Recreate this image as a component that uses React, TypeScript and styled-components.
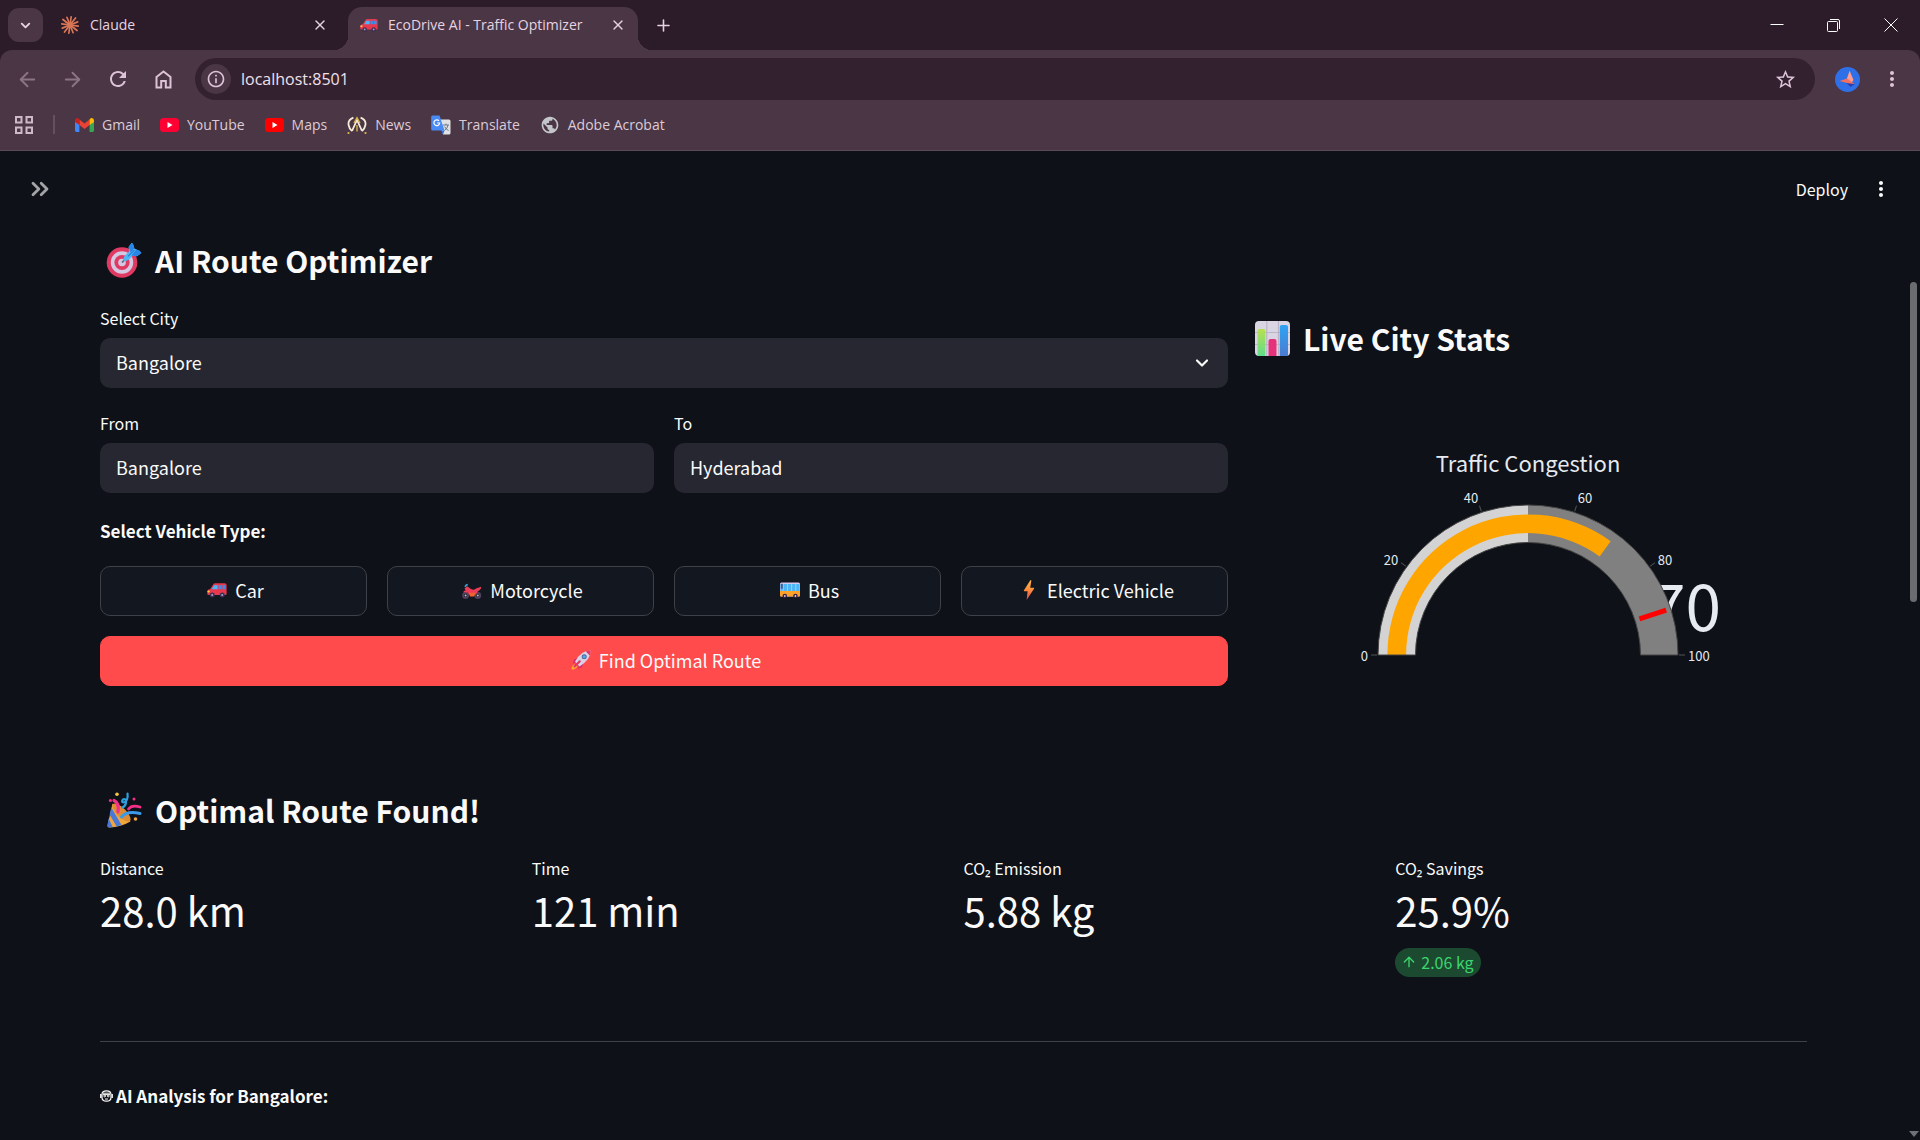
import React, { useState } from "react";
import styled, { createGlobalStyle } from "styled-components";
import { ArrowLeft, ArrowRight, ArrowUp, ChevronDown, ChevronsRight, Plus, X } from "lucide-react";
import {
  MdRefresh,
  MdStarBorder,
  MdMoreVert,
  MdInfoOutline,
  MdPublic,
} from "react-icons/md";

const chromeFont = `"Open Sans", "Noto Sans", sans-serif`;
const appFont = `"Noto Sans CJK JP", "Noto Sans", sans-serif`;

const GlobalStyle = createGlobalStyle`
  * { box-sizing: border-box; }
  body { margin: 0; background: #0e1117; overflow: hidden; }
  button, input, select { font: inherit; color: inherit; margin: 0; }
  h1, h2, h3, p, dl, dd, dt { margin: 0; }
  svg { display: block; flex: none; }
`;

/* ---------- Browser frame ---------- */

const Window = styled.div`
  display: flex;
  flex-direction: column;
  height: 100vh;
  overflow: hidden;
`;

const Frame = styled.header`
  background: #2c1b28;
  color: #e6d3e0;
  font-family: ${chromeFont};
  font-size: 14px;
  line-height: 20px;
`;

const TabStrip = styled.div`
  display: flex;
  align-items: center;
  height: 50px;
  padding-left: 8px;
`;

const TabSearch = styled.button`
  display: grid;
  place-items: center;
  width: 35px;
  height: 34px;
  border: 0;
  border-radius: 11px;
  padding: 0;
  background: #4b3645;
`;

const Tab = styled.div<{ $active?: boolean }>`
  position: relative;
  display: flex;
  align-items: center;
  gap: 10px;
  align-self: flex-end;
  height: 43px;
  width: ${(p) => (p.$active ? 290 : 305)}px;
  padding: ${(p) => (p.$active ? "0 12px 7px 12px" : "0 20px 7px 17px")};
  border-radius: 14px 14px 0 0;
  background: ${(p) => (p.$active ? "#4b3645" : "transparent")};
  &::before,
  &::after {
    content: "";
    display: ${(p) => (p.$active ? "block" : "none")};
    position: absolute;
    bottom: 0;
    width: 14px;
    height: 14px;
  }
  &::before {
    left: -14px;
    background: radial-gradient(circle at 0 0, transparent 14px, #4b3645 14px);
  }
  &::after {
    right: -14px;
    background: radial-gradient(circle at 100% 0, transparent 14px, #4b3645 14px);
  }
`;

const TabTitle = styled.span`
  flex: 1;
  white-space: nowrap;
`;

const PlainButton = styled.button<{ $dim?: boolean }>`
  display: grid;
  place-items: center;
  border: 0;
  padding: 0;
  background: none;
  color: ${(p) => (p.$dim ? "#8b7585" : "inherit")};
`;

const NewTab = styled(PlainButton)`
  width: 26px;
  margin-left: 12px;
`;

const WindowControls = styled.div`
  display: flex;
  gap: 41px;
  margin-left: auto;
  padding-right: 21px;
  color: #fff;
`;

const Toolbar = styled.div`
  display: flex;
  align-items: center;
  height: 58px;
  padding: 0 16px;
  background: #4b3645;
  border-radius: 12px 12px 0 0;
  color: #dcc3d6;
`;

const NavButtons = styled.div`
  display: flex;
  gap: 22px;
  margin-right: 20px;
`;

const Omnibox = styled.div`
  display: flex;
  align-items: center;
  flex: 1;
  height: 42px;
  padding: 0 18px 0 6px;
  border-radius: 21px;
  background: #33212f;
`;

const SiteInfo = styled(PlainButton)`
  width: 30px;
  height: 30px;
  border-radius: 15px;
  background: #4b3645;
`;

const Address = styled.input`
  flex: 1;
  border: 0;
  outline: 0;
  padding: 0 10px;
  background: none;
  color: #f0e0ea;
  font-size: 16px;
`;

const Profile = styled(PlainButton)`
  margin: 0 20px;
`;

const Bookmarks = styled.nav`
  display: flex;
  align-items: center;
  gap: 20px;
  height: 43px;
  padding: 0 15px 9px;
  border-bottom: 1px solid #5a4a55;
  background: #4b3645;
`;

const BookmarkRule = styled.span`
  width: 2px;
  height: 19px;
  background: #65505f;
`;

const Bookmark = styled.a`
  display: flex;
  align-items: center;
  gap: 8px;
  color: #dccbd7;
  text-decoration: none;
`;

/* ---------- Page ---------- */

const Viewport = styled.div`
  display: flex;
  flex: 1;
  min-height: 0;
  background: #0e1117;
  color: #fafafa;
  font-family: ${appFont};
  font-size: 18px;
  line-height: 30px;
`;

const Page = styled.div`
  flex: 1;
  min-width: 0;
`;

const AppHeader = styled.div`
  display: flex;
  align-items: center;
  justify-content: space-between;
  height: 75px;
  padding: 0 14px 0 26px;
`;

const HeaderActions = styled.div`
  display: flex;
  align-items: center;
  gap: 21px;
  font-size: 16px;
`;

const ScrollGutter = styled.div`
  display: flex;
  flex-direction: column;
  justify-content: space-between;
  align-items: center;
  width: 13px;
  padding: 131px 0 3px;
`;

const ScrollThumb = styled.div`
  width: 7px;
  height: 320px;
  border-radius: 4px;
  background: #6b6c70;
`;

const ScrollArrow = styled.div`
  border: 5px solid transparent;
  border-top: 6px solid #6f7177;
  border-bottom: 0;
`;

const Main = styled.main`
  padding: 14px 100px 0;
`;

const Columns = styled.div`
  display: flex;
  gap: 20px;
`;

const Column = styled.section<{ $share: number }>`
  flex: 1 1 calc(${(p) => p.$share}% - 20px);
  min-width: 0;
`;

const StatsColumn = styled(Column)`
  padding-top: 78px;
`;

const Heading = styled.h3`
  display: flex;
  align-items: center;
  gap: 7px;
  margin-bottom: 26px;
  font-size: 30px;
  font-weight: 700;
  line-height: 40px;
  white-space: nowrap;
`;

const HeadingIcon = styled.span`
  display: flex;
  justify-content: center;
  width: 48px;
`;

const Field = styled.div`
  flex: 1;
  min-width: 0;
  margin-bottom: 23px;
`;

const FieldRow = styled.div`
  display: flex;
  gap: 20px;
`;

const Label = styled.label`
  display: block;
  margin-bottom: 8px;
  font-size: 16px;
  line-height: 24px;
`;

const TextBox = styled.input`
  display: block;
  width: 100%;
  height: 50px;
  padding: 0 16px 2px;
  border: 0;
  border-radius: 10px;
  background: #262730;
`;

const SelectWrap = styled.div`
  display: grid;
  align-items: center;
  & > * {
    grid-area: 1 / 1;
  }
  & > svg {
    justify-self: end;
    margin-right: 16px;
    pointer-events: none;
  }
`;

const SelectBox = styled.select`
  appearance: none;
  width: 100%;
  height: 50px;
  padding: 0 16px 2px;
  border: 0;
  border-radius: 10px;
  background: #262730;
`;

const Strong = styled.p`
  font-size: 17px;
  font-weight: 700;
`;

const VehicleRow = styled.div`
  display: grid;
  grid-template-columns: repeat(4, 1fr);
  gap: 20px;
  margin: 20px 0;
`;

const ActionButton = styled.button<{ $primary?: boolean }>`
  display: flex;
  align-items: center;
  justify-content: center;
  gap: 8px;
  width: 100%;
  height: 50px;
  padding: 0 0 2px 4px;
  border: 1px solid ${(p) => (p.$primary ? "#ff4b4b" : "#3e4148")};
  border-radius: 10px;
  background: ${(p) => (p.$primary ? "#ff4b4b" : "#131720")};
`;

const Chart = styled.figure`
  display: flex;
  justify-content: center;
  margin: 72px 0 0;
`;

const ChartText = styled.text<{ $size: number }>`
  fill: #e6eaf1;
  font-family: ${appFont};
  font-size: ${(p) => p.$size}px;
`;

const ResultHeading = styled(Heading)`
  margin-top: 104px;
`;

const Metrics = styled.dl`
  display: grid;
  grid-template-columns: repeat(4, 1fr);
  gap: 20px;
`;

const MetricLabel = styled.dt`
  font-size: 16px;
  line-height: 24px;
`;

const MetricValue = styled.dd`
  margin-bottom: 8px;
  font-size: 40px;
  line-height: 60px;
`;

const Delta = styled.dd`
  display: flex;
  align-items: center;
  gap: 4px;
  width: fit-content;
  height: 29px;
  padding: 0 7px 1px 6px;
  border-radius: 15px;
  background: #1b4a31;
  color: #3dd56d;
  font-size: 16px;
`;

const Divider = styled.hr`
  height: 1px;
  margin: 64px 0 39px;
  border: 0;
  background: #3e4148;
`;

const Analysis = styled(Strong)`
  display: flex;
  align-items: center;
  gap: 3px;
`;

/* ---------- Drawings ---------- */

const ClaudeMark = () => (
  <svg width="20" height="20" viewBox="0 0 20 20" stroke="#d97757" strokeWidth="1.7" strokeLinecap="round">
    {Array.from({ length: 12 }, (_, i) => {
      const a = ((i * 30 + 8) * Math.PI) / 180;
      const r = i % 3 === 1 ? 9 : 8.3;
      return <line key={i} x1="10" y1="10" x2={10 + r * Math.cos(a)} y2={10 + r * Math.sin(a)} />;
    })}
  </svg>
);

const HomeIcon = () => (
  <svg width="23" height="23" viewBox="1 1 23 23" fill="none" stroke="currentColor" strokeWidth="2">
    <path d="M5.5 10 12.5 4.5 19.5 10V20.5H14.8V14H10.2V20.5H5.5Z" />
  </svg>
);

const CarIcon = ({ size = 20 }: { size?: number }) => (
  <svg width={size} height={size} viewBox="0 0 20 20">
    <path d="M5.6 5.4Q6.4 3.2 8 3.2H17.5Q19.6 3.2 19.6 5.1V14Q19.6 15 18.5 15H1.5Q.3 15 .3 13.8V11Q.5 9.4 3.2 9Z" fill="#e8384f" />
    <path d="M7 5.2H10.6V9.2H4.6Z" fill="#4fb4f5" />
    <path d="M11.6 5.2H14.7V9.2H11.6ZM15.6 5.2H18.4V9.2H15.6Z" fill="#3b8fe8" />
    <rect x=".4" y="10.4" width="2.4" height="2" rx="1" fill="#ffc83d" />
    <circle cx="5.2" cy="14.9" r="2.5" fill="#3b2f55" />
    <circle cx="15.2" cy="14.9" r="2.5" fill="#3b2f55" />
    <circle cx="5.2" cy="14.9" r="1" fill="#a9a3bd" />
    <circle cx="15.2" cy="14.9" r="1" fill="#a9a3bd" />
  </svg>
);

const MotorcycleIcon = () => (
  <svg width="20" height="20" viewBox="0 0 20 20">
    <circle cx="3.6" cy="15.4" r="2.5" fill="none" stroke="#52425f" strokeWidth="1.8" />
    <circle cx="15.8" cy="15.4" r="2.5" fill="none" stroke="#52425f" strokeWidth="1.8" />
    <circle cx="3.6" cy="15.4" r="1" fill="#c9bdd5" />
    <circle cx="15.8" cy="15.4" r="1" fill="#c9bdd5" />
    <path d="M3.4 7Q3 5 5.8 4.4" fill="none" stroke="#35a5dc" strokeWidth="1.5" />
    <path d="M2.6 8.4 5 6.2 9 9Q12 10.6 14.6 8.2L19.2 6.8Q19.4 9.6 16 11.2L13.8 14.6H7L5.6 12.6 1.2 12.2Q1.6 10.6 3.6 10.4Z" fill="#ed3c58" />
    <path d="M6.8 12.8H13.4L12.2 16.6H8Z" fill="#f3612c" />
  </svg>
);

const BusIcon = () => (
  <svg width="20" height="20" viewBox="0 0 20 20">
    <rect y="2.5" width="20" height="14" rx="1.5" fill="#d6c8ee" />
    <rect x=".4" y="4" width="19.2" height="7.2" fill="#4bb5f7" />
    <path d="M3.2 4V11M7.4 4V11M11.6 4V11M15.8 4V11" stroke="#8dd6ff" strokeWidth="1" />
    <path d="M0 11H20V15.5Q20 16.5 19 16.5H1Q0 16.5 0 15.5Z" fill="#fba32a" />
    <rect x=".8" y="3.8" width="2" height="5" fill="#4a5b8c" />
    <circle cx="4.8" cy="16" r="2.3" fill="#3b2040" />
    <circle cx="15.4" cy="16" r="2.3" fill="#3b2040" />
    <circle cx="4.8" cy="16" r=".9" fill="#d8d0e0" />
    <circle cx="15.4" cy="16" r=".9" fill="#d8d0e0" />
  </svg>
);

const BoltIcon = () => (
  <svg width="20" height="20" viewBox="0 0 20 20">
    <defs>
      <linearGradient id="bolt" x2="0" y2="1">
        <stop stopColor="#ffb84a" />
        <stop offset=".5" stopColor="#ff8c3a" />
        <stop offset="1" stopColor="#e8415a" />
      </linearGradient>
    </defs>
    <path d="M11.5 0 4.8 10.5Q4.6 11.2 5.4 11.2H8.6L7.6 20 15.2 8.6Q15.4 7.8 14.6 7.8H11.2L12.4.4Z" fill="url(#bolt)" />
  </svg>
);

const RocketIcon = () => (
  <svg width="20" height="20" viewBox="0 0 20 20">
    <path d="M.5 19.5Q.5 14.5 4.4 14.2L6.4 16.4Q5 19.5.5 19.5Z" fill="#ffa630" />
    <path d="M7.8 7.2 3 9.8 1.8 13.4 6 12.6ZM12.8 12.4 11 17 7.2 19 7.6 14.4Z" fill="#d52d6d" />
    <path d="M19.5.5Q20.2 9 8.6 16.4L4 11.8Q9.5.6 19.5.5Z" fill="#d9d2e6" />
    <path d="M14.8 1.4Q17 .5 19.5.5 19.6 3 18.7 5.4Z" fill="#e63264" />
    <circle cx="13.2" cy="6.8" r="2.5" fill="#5a6390" />
    <circle cx="13.2" cy="6.8" r="1.6" fill="#4aa9f2" />
    <path d="M3.5 16.5 8.8 11.2" stroke="#e63264" strokeWidth="2" strokeLinecap="round" />
  </svg>
);

const TargetIcon = () => (
  <svg width="36" height="36" viewBox="0 0 36 36">
    <circle cx="16" cy="20.5" r="15.3" fill="#e03a62" />
    <circle cx="16" cy="20.5" r="11.2" fill="#d5c8e2" />
    <circle cx="16" cy="20.5" r="7.6" fill="#e03a62" />
    <circle cx="16" cy="20.5" r="3.8" fill="#d5c8e2" />
    <path d="M16.5 20 19.5 17" stroke="#6d7490" strokeWidth="1.8" strokeLinecap="round" />
    <path d="M17.8 18.8Q16.8 15 20 12.4L23 9.6 22.6 5 25.8.8Q27.8 2.2 28.3 6.6L30.4 7.6Q34 8.4 35.4 11L31 14.2 26.6 13.6 24.6 16Q21.6 19.8 17.8 18.8Z" fill="#4db8f5" />
    <path d="M22.6 5 25.8.8Q27.8 2.2 28.3 6.6L24.6 10.6ZM27.4 10.8 30.4 7.6Q34 8.4 35.4 11L31 14.2 25.4 13.4Z" fill="#2a86e6" />
    <path d="M22 14.4 28.6 7.8" stroke="#2779d8" strokeWidth="1.2" />
  </svg>
);

const BarsIcon = () => (
  <svg width="35" height="35" viewBox="0 0 35 35">
    <defs>
      <linearGradient id="green" x2="0" y2="1">
        <stop stopColor="#b8e04f" />
        <stop offset="1" stopColor="#5fdc8b" />
      </linearGradient>
      <linearGradient id="blue" x2="0" y2="1">
        <stop stopColor="#2fa4f3" />
        <stop offset="1" stopColor="#4a7bd0" />
      </linearGradient>
    </defs>
    <rect width="35" height="35" rx="4" fill="#dad5e3" />
    <path d="M11.8 0V35M23.5 0V35M0 11.5H35M0 23.5H35" stroke="#bbb4c8" strokeWidth="1.2" />
    <path d="M2.5 35V10Q2.5 8 4.5 8H8.3Q10.3 8 10.3 10V35Z" fill="url(#green)" />
    <path d="M13.5 35V20Q13.5 18 15.5 18H19.5Q21.5 18 21.5 20V35Z" fill="#e6327a" />
    <path d="M24.8 35V6Q24.8 4 26.8 4H31Q33 4 33 6V35Z" fill="url(#blue)" />
  </svg>
);

const PartyIcon = () => (
  <svg width="36" height="36" viewBox="0 0 36 36">
    <path d="M6.5 11.5 24.5 29.5Q15 35 3.4 35.4 1.2 35.6 1.5 33.4Z" fill="#f0a63c" />
    <path d="M5.3 15.5 15.5 33 10.6 34.5 3.6 22.5ZM2.6 26.2 6.8 35.2 3 35.5Q1.2 35.4 1.5 33Z" fill="#4a78d8" />
    <ellipse cx="15.5" cy="20.5" rx="4.6" ry="12" transform="rotate(-45 15.5 20.5)" fill="#dd8b34" />
    <path d="M8 8.5Q13.5 11 12 20" fill="none" stroke="#f5308a" strokeWidth="3.2" strokeLinecap="round" />
    <path d="M21.5 1.5Q22.5 9.5 17.5 10.5 15 10 17 7.5 20.5 6 20 11 19 15 16 15.5" fill="none" stroke="#2f9fe0" strokeWidth="2.2" strokeLinecap="round" />
    <path d="M22.5 17Q26 12.5 34 15" fill="none" stroke="#f5308a" strokeWidth="2.8" strokeLinecap="round" />
    <path d="M15.5 25Q21 18.5 34 21.5" fill="none" stroke="#3a9ae8" strokeWidth="3" strokeLinecap="round" />
    <circle cx="11" cy="2.2" r="1.8" fill="#f5c543" />
    <circle cx="4.4" cy="8.5" r="1.5" fill="#f5308a" />
    <circle cx="28" cy="7" r="1.5" fill="#f5308a" />
    <circle cx="29.5" cy="27" r="1.8" fill="#f0a63c" />
  </svg>
);

const RobotIcon = () => (
  <svg width="13" height="12" viewBox="0 0 13 12" fill="none" stroke="#fafafa">
    <path d="M2 4.5Q2 .8 6.5.8T11 4.5V7.5Q11 11.2 6.5 11.2T2 7.5Z" strokeWidth="1.2" />
    <path d="M.8 4V8M12.2 4V8" strokeWidth="1.4" />
    <path d="M3 3.2H10M3 4.6H10" strokeWidth="1" />
    <path d="M5 9H8" strokeWidth="1" />
    <circle cx="4.7" cy="6" r=".9" />
    <circle cx="8.3" cy="6" r=".9" />
  </svg>
);

const GmailIcon = () => (
  <svg width="19" height="14" viewBox="0 0 19 14">
    <path d="M0 2.4V12.6Q0 14 1.4 14H4.4V6Z" fill="#4285f4" />
    <path d="M19 2.4V12.6Q19 14 17.6 14H14.6V6Z" fill="#34a853" />
    <path d="M4.4 7V1.4L9.5 5.4 14.6 1.4V7L9.5 11Z" fill="#ea4335" />
    <path d="M0 4V2.2Q.3 0 2.4 0 3.2 0 4.4 1.2V7Z" fill="#c5221f" />
    <path d="M19 4V2.2Q18.7 0 16.6 0 15.8 0 14.6 1.2V7Z" fill="#fbbc04" />
  </svg>
);

const TubeIcon = ({ fill }: { fill: string }) => (
  <svg width="19" height="14" viewBox="0 0 19 14">
    <rect width="19" height="14" rx="3.5" fill={fill} />
    <path d="M7.5 4V10L12.5 7Z" fill="#fff" />
  </svg>
);

const NewsIcon = () => (
  <svg width="20" height="18" viewBox="0 0 20 18" fill="none" strokeWidth="1.8">
    <path d="M6.4 1.6Q.6 4 1.6 9 2.2 12.6 5 15M13.6 1.6Q19.4 4 18.4 9 17.8 12.6 15 15" stroke="#f4ecd8" />
    <path d="M5 15 10 4 15 15" stroke="#f4ecd8" />
    <path d="M7 7 10 1.6 13 7M10 9V15.5" stroke="#d9b14a" strokeWidth="1.4" />
    <path d="M1.5 16V18M18.5 16V18" stroke="#d9b14a" />
  </svg>
);

const TranslateIcon = () => (
  <svg width="20" height="20" viewBox="0 0 20 20">
    <path d="M8 4.5H18Q19.5 4.5 19.5 6V18Q19.5 19.5 18 19.5H12Z" fill="#dfe1e5" />
    <path d="M12 10H18M15 8.5V10M13.4 15.5Q16.6 13.5 17 10M13.6 11.5Q15 14.6 17.6 15.5" fill="none" stroke="#6b7a88" strokeWidth="1" />
    <path d="M10 15.5H13.5L12 19.5Z" fill="#3367d6" />
    <path d="M1.5.5H8.5L13.5 15.5H1.5Q.2 15.5.2 14V2Q.2.5 1.5.5Z" fill="#4a8af4" />
    <path d="M8 5.8A2.9 2.9 0 1 0 8.7 8H6.2" fill="none" stroke="#fff" strokeWidth="1.2" />
  </svg>
);

const AppsIcon = () => (
  <svg width="18" height="18" viewBox="0 0 18 18" fill="none" stroke="#cdb9c8" strokeWidth="2">
    <path d="M1 1H6.5V6.5H1ZM11.5 1H17V6.5H11.5ZM1 11.5H6.5V17H1ZM11.5 11.5H17V17H11.5Z" />
  </svg>
);

const ProfileMark = () => (
  <svg width="25" height="25" viewBox="0 0 25 25">
    <circle cx="12.5" cy="12.5" r="12.5" fill="#2f6fe8" />
    <path d="M8 12.5 20 17 15.5 20Z" fill="#2b3fae" />
    <path d="M14.6 3.8 18.5 13 16.2 16 11.8 12Z" fill="#ff9d92" />
    <path d="M4.5 14 12 11.6 19.8 17 13 16.2Z" fill="#f2705f" />
  </svg>
);

/* ---------- Gauge ---------- */

const cx = 200;
const cy = 225;
const point = (value: number, r: number) => {
  const a = Math.PI * (1 - value / 100);
  return `${(cx + r * Math.cos(a)).toFixed(2)} ${(cy - r * Math.sin(a)).toFixed(2)}`;
};
const ring = (from: number, to: number, r0: number, r1: number) =>
  `M${point(from, r1)}A${r1} ${r1} 0 0 1 ${point(to, r1)}L${point(to, r0)}A${r0} ${r0} 0 0 0 ${point(from, r0)}Z`;

const tickLabels = [
  { value: 0, x: 40, y: 231, anchor: "end" },
  { value: 20, x: 63, y: 135, anchor: "middle" },
  { value: 40, x: 143, y: 73, anchor: "middle" },
  { value: 60, x: 257, y: 73, anchor: "middle" },
  { value: 80, x: 337, y: 135, anchor: "middle" },
  { value: 100, x: 360, y: 231, anchor: "start" },
] as const;

const Gauge = () => (
  <svg width="400" height="246" viewBox="0 0 400 246" role="img" aria-label="Traffic Congestion">
    <ChartText $size={22} x={cx} y={42} textAnchor="middle">
      Traffic Congestion
    </ChartText>
    <ChartText $size={64} x={393} y={201} textAnchor="end">
      70
    </ChartText>
    <path d={ring(0, 50, 112.5, 150)} fill="#d3d3d3" />
    <path d={ring(50, 100, 112.5, 150)} fill="#808080" />
    <path d={ring(0, 70, 121.9, 140.6)} fill="#ffa500" />
    <path d={ring(0, 100, 112.5, 150)} fill="none" stroke="#444" strokeWidth="1" />
    <path d={`M${point(90, 117.2)}L${point(90, 145.3)}`} stroke="#f00" strokeWidth="5" />
    {tickLabels.map((t) => (
      <React.Fragment key={t.value}>
        <path d={`M${point(t.value, 151)}L${point(t.value, 157)}`} stroke="#555" strokeWidth="1" />
        <ChartText $size={13} x={t.x} y={t.y} textAnchor={t.anchor}>
          {t.value}
        </ChartText>
      </React.Fragment>
    ))}
  </svg>
);

/* ---------- Data ---------- */

const bookmarks = [
  { label: "Gmail", icon: <GmailIcon /> },
  { label: "YouTube", icon: <TubeIcon fill="#ff0033" /> },
  { label: "Maps", icon: <TubeIcon fill="#ff0000" /> },
  { label: "News", icon: <NewsIcon /> },
  { label: "Translate", icon: <TranslateIcon /> },
  { label: "Adobe Acrobat", icon: <MdPublic size={20} color="#c3c6cb" /> },
];

const vehicles = [
  { label: "Car", icon: <CarIcon /> },
  { label: "Motorcycle", icon: <MotorcycleIcon /> },
  { label: "Bus", icon: <BusIcon /> },
  { label: "Electric Vehicle", icon: <BoltIcon /> },
];

const metrics = [
  { label: "Distance", value: "28.0 km" },
  { label: "Time", value: "121 min" },
  { label: "CO₂ Emission", value: "5.88 kg" },
  { label: "CO₂ Savings", value: "25.9%", delta: "2.06 kg" },
];

export default function App() {
  const [origin, setOrigin] = useState("Bangalore");
  const [destination, setDestination] = useState("Hyderabad");

  return (
    <Window>
      <GlobalStyle />
      <Frame>
        <TabStrip>
          <TabSearch aria-label="Search tabs">
            <ChevronDown size={15} strokeWidth={3} />
          </TabSearch>
          <Tab>
            <ClaudeMark />
            <TabTitle>Claude</TabTitle>
            <PlainButton aria-label="Close Claude">
              <X size={16} />
            </PlainButton>
          </Tab>
          <Tab $active>
            <CarIcon size={18} />
            <TabTitle>EcoDrive AI - Traffic Optimizer</TabTitle>
            <PlainButton aria-label="Close EcoDrive AI">
              <X size={16} />
            </PlainButton>
          </Tab>
          <NewTab aria-label="New tab">
            <Plus size={19} />
          </NewTab>
          <WindowControls>
            <PlainButton aria-label="Minimize">
              <svg width="16" height="16" viewBox="0 0 16 16" stroke="currentColor">
                <path d="M1.5 7.5H14.5" />
              </svg>
            </PlainButton>
            <PlainButton aria-label="Restore">
              <svg width="16" height="16" viewBox="0 0 16 16" fill="none" stroke="currentColor">
                <rect x="1.5" y="4.5" width="10" height="10" rx="1" />
                <path d="M4 2.5H12Q13.5 2.5 13.5 4V12" />
              </svg>
            </PlainButton>
            <PlainButton aria-label="Close window">
              <svg width="16" height="16" viewBox="0 0 16 16" stroke="currentColor">
                <path d="M1.5 1.5 14.5 14.5M14.5 1.5 1.5 14.5" />
              </svg>
            </PlainButton>
          </WindowControls>
        </TabStrip>
        <Toolbar>
          <NavButtons>
            <PlainButton $dim aria-label="Back">
              <ArrowLeft size={23} strokeWidth={2} />
            </PlainButton>
            <PlainButton $dim aria-label="Forward">
              <ArrowRight size={23} strokeWidth={2} />
            </PlainButton>
            <PlainButton aria-label="Reload">
              <MdRefresh size={24} />
            </PlainButton>
            <PlainButton aria-label="Home">
              <HomeIcon />
            </PlainButton>
          </NavButtons>
          <Omnibox>
            <SiteInfo aria-label="View site information">
              <MdInfoOutline size={20} />
            </SiteInfo>
            <Address aria-label="Address" defaultValue="localhost:8501" />
            <PlainButton aria-label="Bookmark this page">
              <MdStarBorder size={23} />
            </PlainButton>
          </Omnibox>
          <Profile aria-label="Profile">
            <ProfileMark />
          </Profile>
          <PlainButton aria-label="Browser menu">
            <MdMoreVert size={24} />
          </PlainButton>
        </Toolbar>
        <Bookmarks aria-label="Bookmarks">
          <PlainButton aria-label="Apps">
            <AppsIcon />
          </PlainButton>
          <BookmarkRule />
          {bookmarks.map((b) => (
            <Bookmark key={b.label} href="#">
              {b.icon}
              {b.label}
            </Bookmark>
          ))}
        </Bookmarks>
      </Frame>

      <Viewport>
        <Page>
          <AppHeader>
            <PlainButton aria-label="Open sidebar">
              <ChevronsRight size={28} color="#a3a4a7" strokeWidth={2.4} />
            </PlainButton>
            <HeaderActions>
              <PlainButton>Deploy</PlainButton>
              <PlainButton aria-label="App menu">
                <MdMoreVert size={24} />
              </PlainButton>
            </HeaderActions>
          </AppHeader>

          <Main>
            <Columns>
              <Column $share={66.6666}>
                <Heading>
                  <HeadingIcon>
                    <TargetIcon />
                  </HeadingIcon>
                  AI Route Optimizer
                </Heading>
                <Field>
                  <Label htmlFor="city">Select City</Label>
                  <SelectWrap>
                    <SelectBox id="city" defaultValue="Bangalore">
                      <option>Bangalore</option>
                    </SelectBox>
                    <ChevronDown size={20} strokeWidth={2.6} />
                  </SelectWrap>
                </Field>
                <FieldRow>
                  <Field>
                    <Label htmlFor="from">From</Label>
                    <TextBox id="from" value={origin} onChange={(e) => setOrigin(e.target.value)} />
                  </Field>
                  <Field>
                    <Label htmlFor="to">To</Label>
                    <TextBox id="to" value={destination} onChange={(e) => setDestination(e.target.value)} />
                  </Field>
                </FieldRow>
                <Strong>Select Vehicle Type:</Strong>
                <VehicleRow>
                  {vehicles.map((v) => (
                    <ActionButton key={v.label}>
                      {v.icon}
                      {v.label}
                    </ActionButton>
                  ))}
                </VehicleRow>
                <ActionButton $primary>
                  <RocketIcon />
                  Find Optimal Route
                </ActionButton>
              </Column>

              <StatsColumn $share={33.3333}>
                <Heading>
                  <HeadingIcon>
                    <BarsIcon />
                  </HeadingIcon>
                  Live City Stats
                </Heading>
                <Chart>
                  <Gauge />
                </Chart>
              </StatsColumn>
            </Columns>

            <ResultHeading>
              <HeadingIcon>
                <PartyIcon />
              </HeadingIcon>
              Optimal Route Found!
            </ResultHeading>
            <Metrics>
              {metrics.map((m) => (
                <div key={m.label}>
                  <MetricLabel>{m.label}</MetricLabel>
                  <MetricValue>{m.value}</MetricValue>
                  {m.delta && (
                    <Delta>
                      <ArrowUp size={16} />
                      {m.delta}
                    </Delta>
                  )}
                </div>
              ))}
            </Metrics>
            <Divider />
            <Analysis>
              <RobotIcon />
              AI Analysis for Bangalore:
            </Analysis>
          </Main>
        </Page>
        <ScrollGutter aria-hidden="true">
          <ScrollThumb />
          <ScrollArrow />
        </ScrollGutter>
      </Viewport>
    </Window>
  );
}
